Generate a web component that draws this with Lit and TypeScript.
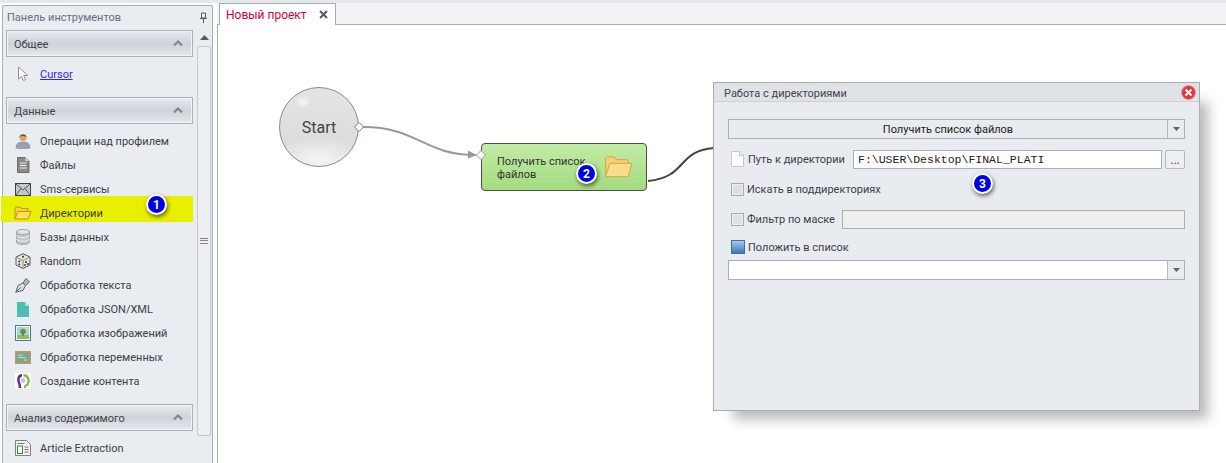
import { LitElement, html, css, svg } from "lit";
import { customElement } from "lit/decorators.js";

const folder = svg`<svg width="18" height="14" viewBox="0 0 18 14"><path d="M1 13V2.500L2 1h4l1.500 1.500H14V5" fill="#f6d23a" stroke="#c8920c"/><path d="M1 13 4 5.500h13L14 13z" fill="#fde35a" stroke="#c8920c"/></svg>`;

const icons: Record<string, unknown> = {
  cursor: svg`<svg width="12" height="16" viewBox="0 0 12 16"><path d="M1.500 1v12l3-2.500 2 4 2.200-1-2-4h4z" fill="#fff" stroke="#8a8f94"/></svg>`,
  person: svg`<svg width="16" height="16" viewBox="0 0 16 16"><circle cx="8" cy="4.500" r="3.600" fill="#d9a272"/><path d="M4.400 4C5 .5 11 .5 11.600 4 9.500 2.500 6.500 2.500 4.400 4z" fill="#7a4a20"/><path d="M1 15c0-4 2-6 7-6s7 2 7 6c-3 1-11 1-14 0z" fill="#9aa0ad" stroke="#7b808c" stroke-width=".5"/></svg>`,
  file: svg`<svg width="14" height="16" viewBox="0 0 14 16"><path d="M1.500.5h8l3.500 3.500v11.500H1.500z" fill="#8a8a8a" stroke="#6c6c6c"/><path d="M9.500.5V4H13z" fill="#ddd"/><path d="M4 6h6.500M4 8.500h6.500M4 11h6.500" stroke="#eee"/></svg>`,
  mail: svg`<svg width="16" height="13" viewBox="0 0 16 13"><rect x=".5" y=".5" width="15" height="12" fill="#c4c8cc" stroke="#3c3f42"/><path d="M1 1l7 6 7-6M1 12l5-6.500M15 12l-5-6.500" fill="none" stroke="#55595d"/></svg>`,
  folder,
  db: svg`<svg width="14" height="16" viewBox="0 0 14 16"><path d="M.5 3v10c0 3.300 13 3.300 13 0V3z" fill="#c0c5ca" stroke="#a0a5aa"/><ellipse cx="7" cy="3" rx="6.500" ry="2.500" fill="#e3e6e9" stroke="#a0a5aa"/><path d="M.5 6.500c0 3 13 3 13 0M.5 10c0 3 13 3 13 0" fill="none" stroke="#f2f3f5"/></svg>`,
  dice: svg`<svg width="16" height="16" viewBox="0 0 16 16"><path d="M8 .8 15 4v8l-7 3.500L1 12V4z" fill="#e9e5d8" stroke="#55585c"/><path d="M1 4l7 3.500L15 4M8 7.500v8" fill="none" stroke="#8d8d85"/><g fill="#333"><circle cx="8" cy="3.800" r="1"/><circle cx="4.300" cy="8.500" r="1"/><circle cx="4.300" cy="11.500" r=".9"/><circle cx="11" cy="9" r="1"/><circle cx="13" cy="11" r=".9"/><circle cx="10" cy="12" r=".9"/></g></svg>`,
  pen: svg`<svg width="16" height="16" viewBox="0 0 16 16"><path d="M.8 15.200 3 8.500 8 6l2.500 2.500L8 13.500z" fill="#d9dcdf" stroke="#5e6165"/><path d="M.8 15.200 5.500 10.500" stroke="#5e6165"/><path d="M8 6l3-4.500 3.500 3.500L10.500 8.500z" fill="#b5b8bb" stroke="#5e6165"/></svg>`,
  teal: svg`<svg width="12" height="15" viewBox="0 0 12 15"><path d="M0 0h8l4 4v11H0z" fill="#4dbdb0"/><path d="M8 0v4h4z" fill="#a6e0d8"/></svg>`,
  image: svg`<svg width="16" height="16" viewBox="0 0 16 16"><rect x=".5" y=".5" width="15" height="15" fill="#fff" stroke="#4a78a8"/><rect x="2" y="2" width="12" height="12" fill="#9fd4f0"/><rect x="2" y="10" width="12" height="4" fill="#8cc152"/><circle cx="8" cy="6.500" r="2.800" fill="#5c9e31"/><rect x="7.500" y="8" width="1" height="3" fill="#74512a"/><circle cx="12" cy="4" r="1.200" fill="#f8e050"/></svg>`,
  board: svg`<svg width="16" height="13" viewBox="0 0 16 13"><rect width="16" height="13" fill="#b79a6c"/><rect x="1.500" y="1.500" width="13" height="10" fill="#7fa58c"/><path d="M3 4h5M3 6.500h8M9 9h3" stroke="#c3dbcb"/></svg>`,
  head: svg`<svg width="16" height="16" viewBox="0 0 16 16"><rect width="16" height="16" fill="#fff"/><path d="M7 1C3 1 1.500 5 2.500 9c.5 2 1.500 3 1 6h2.500C6.500 12 5.500 11 5 9 4 6 5 4 7 3.500z" fill="#5b2d8e"/><path d="M8.500 1c4 0 6 3 6 6l1 2-1.500.5c0 3-1 3.500-3 3.500v2H9c0-2 0-3 2-3.500 1.500-.5 1-2 1.500-3C12.500 5 11 3.500 8.500 3.500z" fill="#7cb342"/><circle cx="8" cy="7.500" r="2.200" fill="#c9b7dd"/></svg>`,
  article: svg`<svg width="16" height="16" viewBox="0 0 16 16"><path d="M.5.500h11l4 4v11H.5z" fill="#f2f2f2" stroke="#7d8185"/><rect x="2.500" y="6" width="5" height="7.500" fill="#fff" stroke="#2e8b2e"/><path d="M2.500 3.500h7M9.500 7h4M9.500 9.500h4M9.500 12h4" stroke="#777"/></svg>`,
};

const chevron = svg`<svg class="chev" width="10" height="7" viewBox="0 0 10 7"><path d="M1 5.500 5 1.500l4 4" fill="none" stroke="#7d838b" stroke-width="2"/></svg>`;
const caret = svg`<svg width="7" height="4" viewBox="0 0 7 4"><path d="M0 0h7L3.500 4z" fill="#5d6269"/></svg>`;

const data: [string, string][] = [
  ["person", "Операции над профилем"],
  ["file", "Файлы"],
  ["mail", "Sms-сервисы"],
  ["folder", "Директории"],
  ["db", "Базы данных"],
  ["dice", "Random"],
  ["pen", "Обработка текста"],
  ["teal", "Обработка JSON/XML"],
  ["image", "Обработка изображений"],
  ["board", "Обработка переменных"],
  ["head", "Создание контента"],
];

@customElement("app-root")
export class AppRoot extends LitElement {
  static styles = css`
    :host {
      display: block;
      width: 1226px;
      height: 463px;
      overflow: hidden;
      font-family: Roboto, "Noto Sans", sans-serif;
      font-size: 11px;
      color: #3b3f45;
      background: linear-gradient(#e4e7eb 0 3px, #fbfcfc 3px);
    }
    .app { display: flex; height: 463px; }
    .side { width: 217px; flex: none; padding: 5px 4px 0 2px; box-sizing: border-box; }
    .panel {
      height: 100%;
      border: 1px solid #a6adb7;
      border-bottom: 0;
      border-radius: 2px 2px 0 0;
      background: #e9ecf1;
      display: flex;
      flex-direction: column;
    }
    .ptitle {
      height: 23px;
      flex: none;
      display: flex;
      align-items: center;
      justify-content: space-between;
      padding: 0 4px;
      color: #63707f;
    }
    .pbody { display: flex; flex: 1; min-height: 0; }
    .list { width: 187px; padding: 1px 0 0 3px; flex: none; }
    .ghead {
      height: 25px;
      border: 1px solid #a9b0ba;
      box-shadow: inset 0 0 0 1px #f1f3f5;
      background: linear-gradient(#e8ebef, #cdd3da 50%, #e6e9ed);
      display: flex;
      align-items: center;
      justify-content: space-between;
      padding: 0 9px 0 7px;
      color: #3e4147;
    }
    .ghead span { padding-top: 2px; }
    .items { padding: 5px 0 11px; }
    .item {
      height: 24px;
      display: flex;
      align-items: center;
      padding-left: 8px;
      margin-left: -5px;
      position: relative;
    }
    .item.on {
      background: #e9ef00;
      box-sizing: border-box;
      height: 26px;
      padding-top: 8px;
      margin-top: -5px;
      margin-bottom: 3px;
    }
    .ic { width: 31px; display: flex; justify-content: center; padding-right: 3px; box-sizing: border-box; flex: none; }
    .link { color: #2b2bf0; text-decoration: underline; }
    .scroll { width: 16px; margin-left: 3px; display: flex; flex-direction: column; align-items: center; flex: none; }
    .up { height: 16px; display: flex; align-items: center; }
    .thumb {
      width: 14px;
      height: 390px;
      margin-top: 1px;
      border: 1px solid #c4c9cf;
      border-radius: 2px;
      background: #edeff3;
      display: flex;
      align-items: center;
      justify-content: center;
      box-sizing: border-box;
    }
    .grip { width: 8px; height: 6px; border-top: 1px solid #7f858c; border-bottom: 1px solid #7f858c; box-sizing: border-box; }
    .grip::after { content: ""; display: block; border-top: 1px solid #7f858c; margin-top: 1px; }
    .main { flex: 1; display: flex; flex-direction: column; min-width: 0; }
    .tabs {
      height: 25px;
      flex: none;
      box-sizing: border-box;
      padding: 3px 0 0 2px;
      border-bottom: 1px solid #a6adb7;
      display: flex;
      background: linear-gradient(#e4e7eb 0 3px, #f0f2f4 3px);
    }
    .tab {
      width: 117px;
      height: 22px;
      box-sizing: border-box;
      border: 1px solid #a6adb7;
      border-bottom: 0;
      background: #fff;
      display: flex;
      align-items: center;
      justify-content: space-between;
      padding: 0 7px 0 6px;
      color: #d4003c;
      font-size: 12px;
    }
    .canvas { flex: 1; position: relative; background: #fff; border-left: 1px solid #a6adb7; }
    .start {
      position: absolute;
      left: 61px;
      top: 62px;
      width: 80px;
      height: 80px;
      box-sizing: border-box;
      border-radius: 50%;
      border: 1px solid #8a8a8a;
      background:
        radial-gradient(ellipse 8px 6px at 29% 18%, #f8f8f8, transparent),
        radial-gradient(ellipse 60% 30% at 50% 92%, #f4f4f4, transparent),
        linear-gradient(#e4e4e4, #dcdcdc 70%, #e2e2e2);
      display: flex;
      align-items: center;
      justify-content: center;
      font-size: 16px;
      color: #444;
    }
    .node {
      position: absolute;
      left: 263px;
      top: 118px;
      width: 166px;
      height: 48px;
      box-sizing: border-box;
      border: 1.500px solid #4a4f4a;
      border-radius: 4px;
      background: linear-gradient(#c2eba6, #a3dc80);
      display: flex;
      align-items: center;
      justify-content: space-between;
      padding: 0 13px 0 15px;
      line-height: 13px;
      color: #333;
    }
    .node .t { width: 92px; padding-top: 1px; }
    .edges { position: absolute; left: 0; top: 0; z-index: 2; }
    .badge {
      position: absolute;
      width: 17px;
      height: 17px;
      border-radius: 50%;
      background: #0000e4;
      border: 2px solid #fff;
      box-shadow: 1px 2px 4px rgba(0,0,0,.6);
      color: #fff;
      font-size: 12px;
      font-weight: 700;
      display: flex;
      align-items: center;
      justify-content: center;
      z-index: 5;
    }
    .dialog {
      position: absolute;
      left: 495px;
      top: 57px;
      width: 487px;
      height: 329px;
      box-sizing: border-box;
      border: 1px solid #a6adb7;
      background: #e8ebf0;
      box-shadow: 14px 14px 12px -6px rgba(0,0,0,.28);
      z-index: 3;
    }
    .dtitle {
      height: 18px;
      background: #dfe3e8;
      border-bottom: 1px solid #ccd0d6;
      display: flex;
      align-items: center;
      justify-content: space-between;
      padding: 0 3px 0 10px;
      color: #3f444a;
    }
    .dtitle span { padding-top: 2px; }
    .dbody { padding: 17px 14px 0; display: flex; flex-direction: column; }
    .combo {
      height: 20px;
      box-sizing: border-box;
      border: 1px solid #a9afb8;
      display: flex;
      align-items: center;
      background: #e8ebf0;
    }
    .combo.w { background: #fff; }
    .combo .v { flex: 1; text-align: center; color: #222; }
    .combo .b { width: 16px; align-self: stretch; display: flex; align-items: center; justify-content: center; border-left: 1px solid #b5bac1; background: #e8ebf0; }
    .row { display: flex; align-items: center; height: 20px; white-space: nowrap; }
    .r1, .r2, .r3 { margin-top: 10px; }
    .r4 { margin-top: 8px; }
    .r5 { margin-top: 3px; }
    .doc { margin: 0 4px 0 3px; display: block; flex: none; }
    .inp {
      height: 19px;
      box-sizing: border-box;
      border: 1px solid #a9afb8;
      background: #fff;
      font-family: "Liberation Mono", monospace;
      font-size: 11.500px;
      color: #222;
      display: flex;
      align-items: center;
      padding-left: 4px;
    }
    .path { width: 309px; margin-left: auto; }
    .dots {
      width: 20px;
      height: 19px;
      margin-left: 3px;
      box-sizing: border-box;
      border: 1px solid #b5bac1;
      border-radius: 2px;
      background: #edeff2;
      text-align: center;
      line-height: 18px;
      font-size: 12px;
      flex: none;
    }
    .cb { width: 13px; height: 13px; box-sizing: border-box; border: 1px solid #a4aab2; background: #dde0e4; box-shadow: inset 0 0 0 1px #eceef1; margin: 0 3px 0 3px; flex: none; }
    .mask { width: 343px; margin-left: auto; background: #efefef; }
    .save { margin: 0 3px 0 3px; flex: none; display: block; }
  `;

  private badge(n: number, x: number, y: number) {
    return html`<div class="badge" style="left:${x}px;top:${y}px">${n}</div>`;
  }

  render() {
    return html`<div class="app">
      <div class="side"><div class="panel">
        <div class="ptitle"><span>Панель инструментов</span>
          <svg width="9" height="11" viewBox="0 0 9 11"><path d="M2.500 1h4v5h-4zM1 6.500h7M4.500 7v4" fill="none" stroke="#555a60"/></svg>
        </div>
        <div class="pbody">
          <div class="list">
            <div class="ghead"><span>Общее</span>${chevron}</div>
            <div class="items"><div class="item"><span class="ic">${icons.cursor}</span><span class="link">Cursor</span></div></div>
            <div class="ghead"><span>Данные</span>${chevron}</div>
            <div class="items">
              ${data.map(([k, t]) => html`<div class="item ${t === "Директории" ? "on" : ""}"><span class="ic">${icons[k]}</span><span>${t}</span></div>`)}
            </div>
            <div class="ghead"><span>Анализ содержимого</span>${chevron}</div>
            <div class="items"><div class="item"><span class="ic">${icons.article}</span><span>Article Extraction</span></div></div>
          </div>
          <div class="scroll">
            <div class="up"><svg width="9" height="5" viewBox="0 0 9 5"><path d="M0 5h9L4.500 0z" fill="#555a60"/></svg></div>
            <div class="thumb"><div class="grip"></div></div>
          </div>
        </div>
      </div></div>
      ${this.badge(1, 146, 194)}
      <div class="main">
        <div class="tabs"><div class="tab"><span>Новый проект</span>
          <svg width="9" height="9" viewBox="0 0 9 9"><path d="M1 1l7 7M8 1 1 8" stroke="#555a60" stroke-width="2"/></svg>
        </div></div>
        <div class="canvas">
          <div class="start">Start</div>
          <div class="node"><span class="t">Получить список файлов</span>
            <svg width="29" height="22" viewBox="0 0 31 24"><path d="M1.500 22V2.500L3 1h8l2 3h12l1 1.500V8" fill="#f7cf78" stroke="#d9a03e"/><path d="M1.500 22.500 6 8h24l-4 14.500z" fill="#fbdc8c" stroke="#d9a03e"/></svg>
          </div>
          <svg class="edges" width="1009" height="438">
            <path d="M145 102C200 102 205 130 258 130" fill="none" stroke="#999" stroke-width="2"/>
            <path d="M250 125.500 259 130 250 133.500z" fill="#999"/>
            <path d="M430 156C470 152 458 126 496 123" fill="none" stroke="#444" stroke-width="2"/>
            <path d="M141 97.500 145.500 102 141 106.500 136.500 102z" fill="#fff" stroke="#4aa24a"/>
            <path d="M263 125.500 267.500 130 263 134.500 258.500 130z" fill="#fff" stroke="#999"/>
          </svg>
          <div class="dialog">
            <div class="dtitle"><span>Работа с директориями</span>
              <svg width="15" height="15" viewBox="0 0 15 15"><circle cx="7.500" cy="7.500" r="7" fill="#e0383a" stroke="#c9a0a0"/><path d="M4.500 4.500l6 6M10.500 4.500l-6 6" stroke="#fff" stroke-width="2"/></svg>
            </div>
            <div class="dbody">
              <div class="combo"><span class="v">Получить список файлов</span><span class="b">${caret}</span></div>
              <div class="row r1">
                <svg class="doc" width="13" height="16" viewBox="0 0 13 16"><path d="M.5.500h8l4 4v11H.5z" fill="#fff" stroke="#c4c7cb"/><path d="M8.500.500v4h4" fill="#eee" stroke="#c4c7cb"/></svg>
                <span>Путь к директории</span>
                <div class="inp path">F:\\USER\\Desktop\\FINAL_PLATI</div>
                <div class="dots">...</div>
              </div>
              <div class="row r2"><span class="cb"></span><span>Искать в поддиректориях</span></div>
              <div class="row r3"><span class="cb"></span><span>Фильтр по маске</span><div class="inp mask"></div></div>
              <div class="row r4">
                <svg class="save" width="14" height="14" viewBox="0 0 14 14"><defs><linearGradient id="sv" x1="0" y1="0" x2="0" y2="1"><stop offset="0" stop-color="#a8cdf0"/><stop offset="1" stop-color="#3a72b2"/></linearGradient></defs><rect x=".5" y=".5" width="13" height="13" fill="url(#sv)" stroke="#3f6fa5"/></svg>
                <span>Положить в список</span>
              </div>
              <div class="combo w r5"><span class="v"></span><span class="b">${caret}</span></div>
            </div>
          </div>
          ${this.badge(2, 358, 138)}
          ${this.badge(3, 754, 148)}
        </div>
      </div>
    </div>`;
  }
}
